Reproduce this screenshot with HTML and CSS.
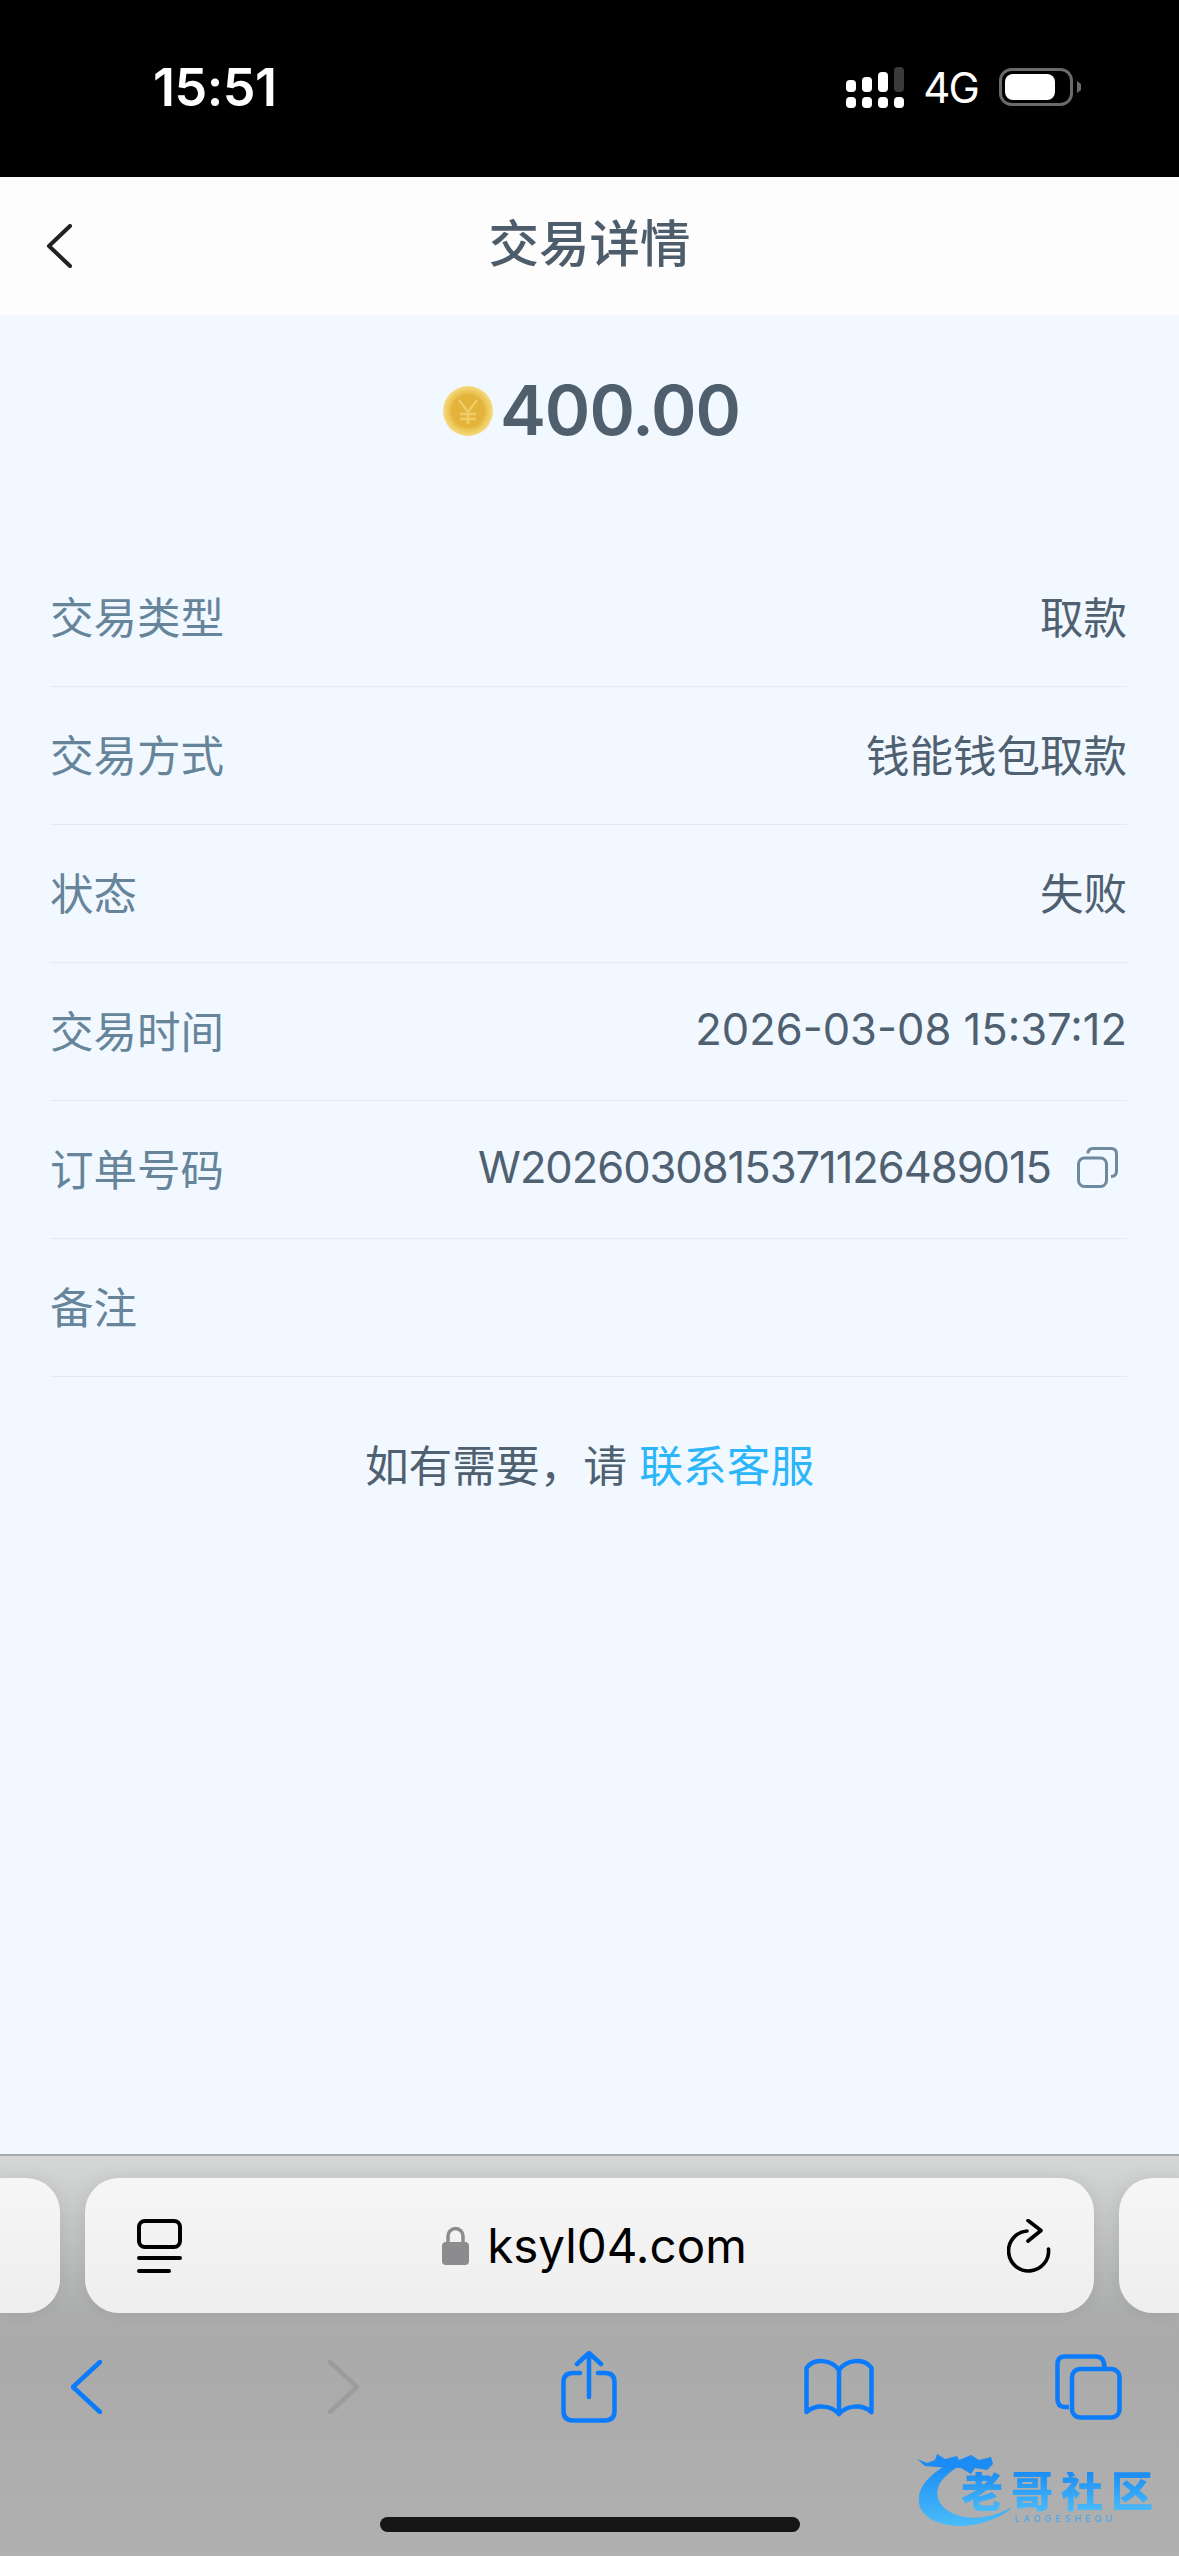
FILE: index.html
```html
<!DOCTYPE html>
<html lang="zh-CN">
<head>
    <meta charset="UTF-8">
    <meta name="viewport" content="width=device-width, initial-scale=1.0">
    <title>交易详情</title>
    <link rel="stylesheet" href="styles.css">
</head>
<body>
    <div class="status-bar">
        <div class="status-time">15:51</div>
        <div class="status-right">
            <svg class="signal" width="58" height="41" viewBox="0 0 58 41">
                <rect x="0" y="13" width="10" height="12" rx="4" fill="#fff"/>
                <rect x="16" y="10" width="10" height="15" rx="4" fill="#fff"/>
                <rect x="32" y="5" width="10" height="20" rx="4" fill="#fff"/>
                <rect x="48" y="0" width="10" height="25" rx="4" fill="#3a3a3a"/>
                <rect x="0" y="30" width="10" height="11" rx="4" fill="#fff"/>
                <rect x="16" y="30" width="10" height="11" rx="4" fill="#fff"/>
                <rect x="32" y="30" width="10" height="11" rx="4" fill="#fff"/>
                <rect x="48" y="30" width="10" height="11" rx="4" fill="#fff"/>
            </svg>
            <span class="status-net">4G</span>
            <svg class="battery" width="82" height="38" viewBox="0 0 82 38">
                <rect x="1.5" y="1.5" width="71" height="35" rx="11" fill="none" stroke="#6a6a6a" stroke-width="3"/>
                <rect x="6" y="6" width="50" height="26" rx="8" fill="#fff"/>
                <path d="M78 13 L82 16 Q83 19 82 22 L78 25 Z" fill="#6a6a6a"/>
            </svg>
        </div>
    </div>

    <div class="nav-bar">
        <svg class="nav-back" width="26" height="44" viewBox="0 0 26 44">
            <path d="M24 2 L3 22 L24 42" fill="none" stroke="#222" stroke-width="4" stroke-linecap="round" stroke-linejoin="round"/>
        </svg>
        <h1 class="nav-title">交易详情</h1>
    </div>

    <div class="main">
        <div class="amount">
            <svg class="coin" width="50" height="50" viewBox="0 0 50 50">
                <defs>
                    <radialGradient id="coin-fill" cx="50%" cy="50%" r="50%">
                        <stop offset="0" stop-color="#e6bb45"/>
                        <stop offset="0.7" stop-color="#e8be48"/>
                        <stop offset="1" stop-color="#f5dc80"/>
                    </radialGradient>
                </defs>
                <circle cx="25" cy="25" r="25" fill="url(#coin-fill)"/>
                <circle cx="25" cy="25" r="17" fill="#e3b33c"/>
                <path d="M16 14 L25 26 L34 14 M25 26 V38 M17 28 H33 M17 33 H33" fill="none" stroke="#f0cd66" stroke-width="2.4"/>
            </svg>
            <span class="amount-num">400.00</span>
        </div>

        <div class="detail-list">
            <div class="detail-row">
                <span class="detail-label">交易类型</span>
                <span class="detail-value">取款</span>
            </div>
            <div class="detail-row">
                <span class="detail-label">交易方式</span>
                <span class="detail-value">钱能钱包取款</span>
            </div>
            <div class="detail-row">
                <span class="detail-label">状态</span>
                <span class="detail-value">失败</span>
            </div>
            <div class="detail-row">
                <span class="detail-label">交易时间</span>
                <span class="detail-value">2026-03-08 15:37:12</span>
            </div>
            <div class="detail-row">
                <span class="detail-label">订单号码</span>
                <span class="detail-value order-value">
                    <span class="order-num">W2026030815371126489015</span>
                    <svg class="copy-icon" width="41" height="41" viewBox="0 0 41 41">
                        <rect x="1.5" y="11" width="28" height="28.5" rx="6" fill="none" stroke="#6f8a9e" stroke-width="3"/>
                        <path d="M11 6.5 Q11 1.5 16 1.5 H34 Q39.5 1.5 39.5 7 V24 Q39.5 29.5 34 29.5" fill="none" stroke="#6f8a9e" stroke-width="3"/>
                    </svg>
                </span>
            </div>
            <div class="detail-row">
                <span class="detail-label">备注</span>
                <span class="detail-value"></span>
            </div>
        </div>

        <p class="help">如有需要，请 <a class="help-link">联系客服</a></p>
    </div>

    <div class="toolbar">
        <div class="url-row">
            <div class="url-side url-side-left"></div>
            <div class="url-bar">
                <svg width="45" height="54" viewBox="0 0 45 54">
                    <rect x="2" y="2" width="41" height="26" rx="6" fill="none" stroke="#000" stroke-width="4"/>
                    <path d="M2 39 H43 M2 52 H32" fill="none" stroke="#000" stroke-width="4" stroke-linecap="round"/>
                </svg>
                <div class="url-text">
                    <svg width="27" height="39" viewBox="0 0 27 39">
                        <path d="M6 17 V10 A7.5 7.5 0 0 1 21 10 V17" fill="none" stroke="#8c8c8e" stroke-width="3.5"/>
                        <rect x="0" y="16" width="27" height="23" rx="4" fill="#8c8c8e"/>
                    </svg>
                    <span class="url-host">ksyl04.com</span>
                </div>
                <svg width="44" height="54" viewBox="0 0 44 54">
                    <path d="M20 12 A20 20 0 1 0 41.5 30" fill="none" stroke="#000" stroke-width="3.6" stroke-linecap="round"/>
                    <path d="M21 1.5 L34 11.5 L21 22" fill="none" stroke="#000" stroke-width="3.6" stroke-linecap="round" stroke-linejoin="round"/>
                </svg>
            </div>
            <div class="url-side url-side-right"></div>
        </div>

        <div class="tool-row">
            <svg width="31" height="54" viewBox="0 0 31 54">
                <path d="M29 2 L2 27 L29 52" fill="none" stroke="#0a7bfb" stroke-width="4.5" stroke-linecap="round" stroke-linejoin="round"/>
            </svg>
            <svg width="31" height="54" viewBox="0 0 31 54">
                <path d="M2 2 L29 27 L2 52" fill="none" stroke="#9c9c9c" stroke-width="4.5" stroke-linecap="round" stroke-linejoin="round"/>
            </svg>
            <svg width="56" height="72" viewBox="0 0 56 72">
                <path d="M19 22 H12 Q2.5 22 2.5 31 V60 Q2.5 69.5 12 69.5 H44 Q53.5 69.5 53.5 60 V31 Q53.5 22 44 22 H37" fill="none" stroke="#0a7bfb" stroke-width="4.5" stroke-linecap="round"/>
                <path d="M28 46 V3 M16 13 L28 2 L40 13" fill="none" stroke="#0a7bfb" stroke-width="4.5" stroke-linecap="round" stroke-linejoin="round"/>
            </svg>
            <svg width="70" height="59" viewBox="0 0 70 59">
                <path d="M35 12 C28 2 10 -1 2.5 10 V54 C12 46 27 47 35 56 C43 47 58 46 67.5 54 V10 C60 -1 42 2 35 12 Z M35 12 V56" fill="none" stroke="#0a7bfb" stroke-width="4.5" stroke-linejoin="round"/>
            </svg>
            <svg width="67" height="66" viewBox="0 0 67 66">
                <path d="M14 53 H10 Q2.5 53 2.5 45 V10 Q2.5 2.5 10 2.5 H41 Q49 2.5 49.5 13" fill="none" stroke="#0a7bfb" stroke-width="4.5"/>
                <rect x="17" y="15" width="47.5" height="48.5" rx="8" fill="none" stroke="#0a7bfb" stroke-width="4.5"/>
            </svg>
        </div>

        <div class="home-indicator"></div>

        <div class="watermark">
            <svg class="watermark-logo" width="110" height="76" viewBox="0 0 110 76">
                <defs>
                    <linearGradient id="wm-fill" x1="0" y1="0" x2="0" y2="1">
                        <stop offset="0" stop-color="#1a8cf4"/>
                        <stop offset="1" stop-color="#4bbcf9"/>
                    </linearGradient>
                </defs>
                <path d="M33 12 C10 25 0 40 5 55 C13 74 45 78 70 70 C85 65 93 60 97 55 C80 65 60 68 45 64 C23 58 15 40 30 25 C35 20 40 16 45 14 Z" fill="url(#wm-fill)"/>
                <path d="M2 7 L12 11 L20 8 L22 2 L30 7 L42 4 L44 8 L56 3 L64 8 L76 5 L78 12 L72 18 L60 16 L56 22 L46 16 L34 16 L22 15 L10 14 Z" fill="#1a8cf4"/>
            </svg>
            <div class="watermark-name">老哥社区</div>
            <div class="watermark-sub">LAOGESHEQU</div>
        </div>
    </div>
</body>
</html>
```

FILE: styles.css
```css
* {
    box-sizing: border-box;
}
html, body {
    margin: 0;
    padding: 0;
}
body {
    width: 1179px;
    height: 2556px;
    overflow: hidden;
    display: flex;
    flex-direction: column;
    font-family: Inter, "Noto Sans CJK SC", sans-serif;
    background-color: #f1f8ff;
}

/* status bar */
.status-bar {
    height: 177px;
    flex: none;
    background-color: #000;
    color: #fff;
    display: flex;
    align-items: flex-start;
    justify-content: space-between;
    padding: 0 98px 0 153px;
}
.status-time {
    font-size: 52px;
    font-weight: 600;
    line-height: 50px;
    margin-top: 63px;
    letter-spacing: -0.5px;
}
.status-right {
    display: flex;
    align-items: flex-start;
    margin-top: 67px;
}
.signal {
    display: block;
}
.status-net {
    font-size: 42px;
    line-height: 42px;
    margin: 0 21px 0 19px;
    letter-spacing: -1.8px;
    height: 42px;
}
.battery {
    display: block;
    margin-top: 1px;
}

/* nav bar */
.nav-bar {
    height: 138px;
    flex: none;
    background-color: #fdfdfd;
    display: flex;
    align-items: center;
    justify-content: center;
    position: relative;
}
.nav-back {
    position: absolute;
    left: 46px;
    top: 47px;
}
.nav-title {
    margin: -4px 0 0 0;
    font-size: 50.5px;
    font-weight: 500;
    color: #4e5d6b;
    line-height: 60px;
}

/* main */
.main {
    flex: 1;
}
.amount {
    height: 234px;
    padding: 60px 0 0 4px;
    display: flex;
    align-items: flex-start;
    justify-content: center;
    color: #4f5f6e;
}
.coin {
    display: block;
    margin-top: 11px;
}
.amount-num {
    font-size: 69px;
    font-weight: 600;
    line-height: 70px;
    margin-left: 7px;
    letter-spacing: -1px;
}
.detail-list {
    margin: 0 52px 0 50px;
}
.detail-row {
    height: 138px;
    padding-bottom: 5px;
    display: flex;
    align-items: center;
    justify-content: space-between;
    border-bottom: 1.5px solid #e3eaf0;
    font-size: 43.5px;
}
.detail-label {
    color: #66849a;
}
.detail-value {
    color: #4f6070;
}
.order-value {
    display: flex;
    align-items: center;
}
.order-num {
    letter-spacing: -1.05px;
}
.copy-icon {
    margin: 0 9px 0 26px;
}
.help {
    margin: 60px 0 0 0;
    text-align: center;
    font-size: 43.7px;
    line-height: 60px;
    color: #4f6070;
}
.help-link {
    color: #2bb5fb;
}

/* safari toolbar */
.toolbar {
    height: 402px;
    flex: none;
    position: relative;
    border-top: 2px solid #a9aaaa;
    background: linear-gradient(to bottom, #d6d7d7 0, #acadad 155px, #aaaaaa 190px, #b0b0b0 100%);
}
.url-row {
    display: flex;
    justify-content: space-between;
    margin-top: 22px;
    height: 135px;
}
.url-side {
    width: 60px;
    background: linear-gradient(to bottom, #f6f6f6, #eeeeee);
    box-shadow: 0 0 16px rgba(0, 0, 0, 0.08);
}
.url-side-left {
    border-radius: 0 34px 34px 0;
}
.url-side-right {
    border-radius: 34px 0 0 34px;
}
.url-bar {
    width: 1009px;
    flex: none;
    border-radius: 34px;
    background: linear-gradient(to bottom, #f6f6f6, #eeeeee);
    box-shadow: 0 0 16px rgba(0, 0, 0, 0.08);
    display: flex;
    align-items: center;
    justify-content: space-between;
    padding: 0 43px 0 52px;
}
.url-text {
    display: flex;
    align-items: center;
}
.url-host {
    font-size: 47.5px;
    line-height: 60px;
    color: #000;
    margin-left: 18px;
}
.tool-row {
    display: grid;
    grid-template-columns: 257px 233px 243px 251px 67px;
    align-items: center;
    padding-left: 71px;
    height: 72px;
    margin-top: 38px;
}
.tool-row svg {
    display: block;
}
.home-indicator {
    width: 420px;
    height: 15px;
    border-radius: 8px;
    background-color: #161616;
    margin: 94px auto 0;
}

/* watermark sits over the toolbar */
.watermark {
    position: absolute;
    left: 915px;
    top: 296px;
    width: 245px;
    height: 78px;
    filter: blur(0.6px);
}
.watermark-logo {
    position: absolute;
    left: 0;
    top: 0;
}
.watermark-name {
    position: absolute;
    left: 46px;
    top: 20px;
    font-size: 42px;
    font-weight: 900;
    line-height: 40px;
    letter-spacing: 8px;
    white-space: nowrap;
    background: linear-gradient(to bottom, #1a8cf4, #4bbcf9);
    -webkit-background-clip: text;
    background-clip: text;
    color: transparent;
}
.watermark-sub {
    position: absolute;
    left: 100px;
    top: 62px;
    font-size: 9px;
    line-height: 10px;
    letter-spacing: 4px;
    color: #3aa5f4;
    white-space: nowrap;
}
```
